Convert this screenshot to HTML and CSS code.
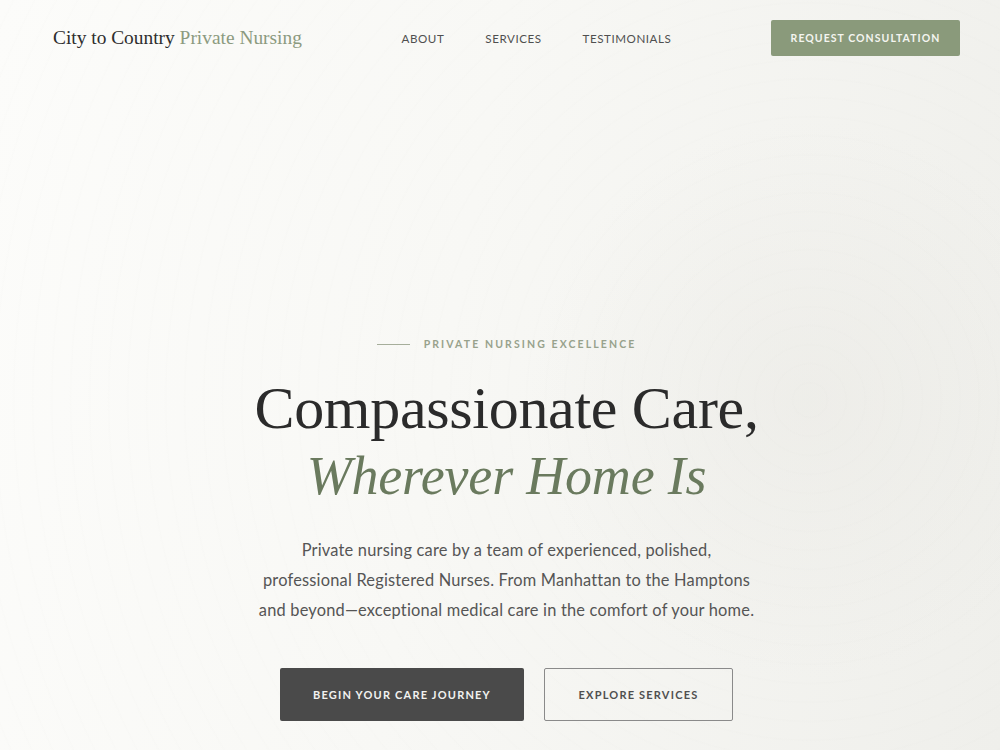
FILE: index.html
```html
<!DOCTYPE html>
<html lang="en">
<head>
<meta charset="utf-8">
<title>City to Country Private Nursing</title>
<link rel="stylesheet" href="styles.css">
</head>
<body>
<div class="page">
  <header class="header">
    <a class="logo" href="#"><span class="logo-main">City to Country</span> <span class="logo-accent">Private Nursing</span></a>
    <nav class="nav">
      <a href="#">About</a>
      <a href="#">Services</a>
      <a href="#">Testimonials</a>
    </nav>
    <a class="btn-consult" href="#">Request Consultation</a>
  </header>
  <main class="hero">
    <div class="eyebrow"><span class="eyebrow-line"></span><span class="eyebrow-text">Private Nursing Excellence</span></div>
    <h1 class="title">Compassionate Care,<br><em>Wherever Home Is</em></h1>
    <p class="lead">Private nursing care by a team of experienced, polished,<br>professional Registered Nurses. From Manhattan to the Hamptons<br>and beyond—exceptional medical care in the comfort of your home.</p>
    <div class="actions">
      <a class="btn btn-dark" href="#">Begin Your Care Journey</a>
      <a class="btn btn-outline" href="#">Explore Services</a>
    </div>
  </main>
</div>
</body>
</html>
```

FILE: styles.css
```css
* { box-sizing: border-box; }
html, body { margin: 0; padding: 0; }
body {
  width: 1000px;
  height: 750px;
  overflow: hidden;
  font-family: "Lato", "Liberation Sans", sans-serif;
  color: #4a4a4a;
  background:
    repeating-radial-gradient(circle at 810px 400px, rgba(0,0,0,0) 0, rgba(0,0,0,0) 16px, rgba(120,120,110,0.01) 17px, rgba(0,0,0,0) 19px),
    radial-gradient(circle at 810px 400px, rgba(232,231,226,0.45) 0, rgba(240,239,235,0) 280px),
    linear-gradient(100deg, #fcfcfa 0%, #f8f8f5 45%, #efefeb 100%);
}
a { text-decoration: none; color: inherit; }

.page { display: flex; flex-direction: column; height: 750px; }

.header {
  display: flex;
  align-items: center;
  justify-content: space-between;
  padding: 20px 40px 0 53px;
  height: 56px;
}
.logo {
  font-family: "Liberation Serif", "DejaVu Serif", serif;
  font-size: 19.4px;
  white-space: nowrap;
}
.logo-main { color: #2e2e2e; }
.logo-accent { color: #8c9a80; }

.nav { display: flex; gap: 41px; }
.nav a {
  font-size: 11.6px;
  letter-spacing: 0.55px;
  text-transform: uppercase;
  color: #4f4f4f;
}

.btn-consult {
  display: flex;
  align-items: center;
  justify-content: center;
  width: 189px;
  height: 36px;
  background: #8a9a7b;
  color: #f4f5f0;
  font-size: 10.5px;
  font-weight: 700;
  letter-spacing: 1.05px;
  text-transform: uppercase;
  border-radius: 2px;
}

.hero {
  display: flex;
  flex-direction: column;
  align-items: center;
  padding: 281px 0 0 13px;
  text-align: center;
}
.eyebrow { display: flex; align-items: center; gap: 14px; height: 14px; }
.eyebrow-line { width: 33px; height: 1px; background: #a6ae9b; }
.eyebrow-text {
  font-size: 10.5px;
  font-weight: 700;
  letter-spacing: 2.1px;
  text-transform: uppercase;
  color: #98a28c;
}

.title {
  margin: 24px 0 0;
  font-family: "Liberation Serif", "DejaVu Serif", serif;
  font-weight: 400;
  font-size: 60px;
  line-height: 66px;
  color: #2b2b2b;
  letter-spacing: -0.3px;
}
.title em { font-style: italic; color: #6a7a5e; font-size: 54px; letter-spacing: -0.2px; }

.lead {
  margin: 26px 0 0;
  width: 540px;
  font-size: 16.4px;
  line-height: 30px;
  letter-spacing: 0.2px;
  color: #555555;
}

.actions { display: flex; gap: 20px; margin-top: 43px; }
.btn {
  display: flex;
  align-items: center;
  justify-content: center;
  height: 53px;
  font-size: 11px;
  font-weight: 700;
  letter-spacing: 1.2px;
  text-transform: uppercase;
}
.btn-dark { width: 244px; background: #4a4a4a; color: #f2f2f0; border-radius: 2px; }
.btn-outline { width: 189px; border: 1px solid #8a8a8a; color: #4f4f4f; border-radius: 2px; }
```
